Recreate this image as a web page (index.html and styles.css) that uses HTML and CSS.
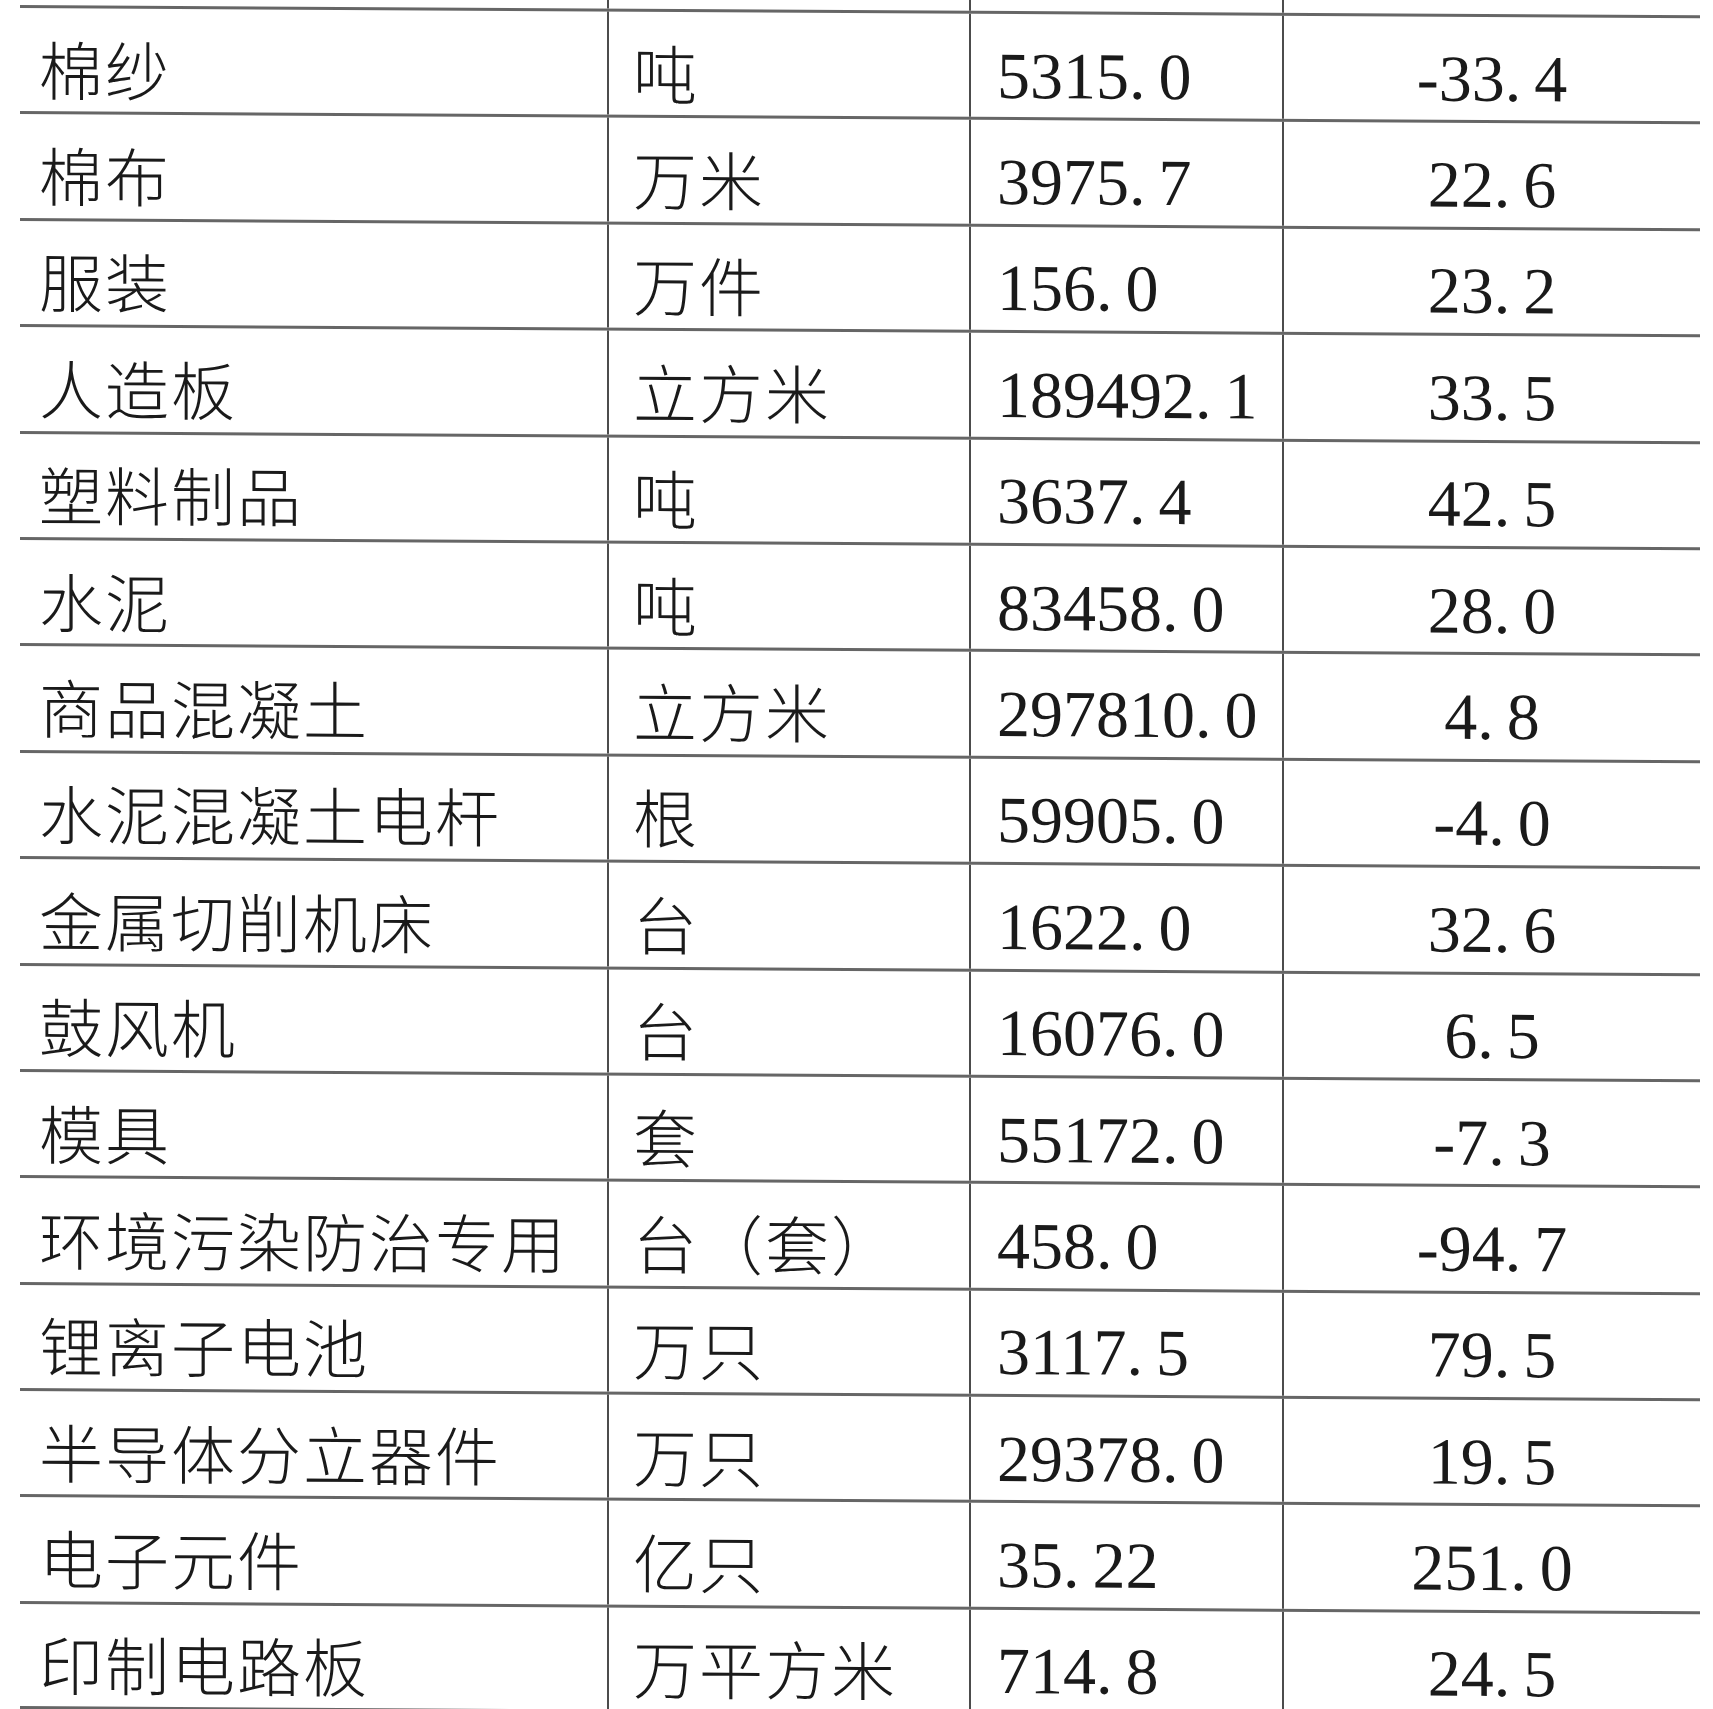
FILE: index.html
```html
<!DOCTYPE html>
<html lang="zh-CN">
<head>
<meta charset="utf-8">
<title>主要工业产品产量</title>
<link rel="stylesheet" href="styles.css">
</head>
<body>
<div class="sheet">
  <div class="row stub"><div class="c c1"></div><div class="c c2"></div><div class="c c3"></div><div class="c c4"></div></div>
  <div class="row"><div class="c c1">棉纱</div><div class="c c2">吨</div><div class="c c3 num">5315<span class="pt">.</span>0</div><div class="c c4 num">-33<span class="pt">.</span>4</div></div>
  <div class="row"><div class="c c1">棉布</div><div class="c c2">万米</div><div class="c c3 num">3975<span class="pt">.</span>7</div><div class="c c4 num">22<span class="pt">.</span>6</div></div>
  <div class="row"><div class="c c1">服装</div><div class="c c2">万件</div><div class="c c3 num">156<span class="pt">.</span>0</div><div class="c c4 num">23<span class="pt">.</span>2</div></div>
  <div class="row"><div class="c c1">人造板</div><div class="c c2">立方米</div><div class="c c3 num">189492<span class="pt">.</span>1</div><div class="c c4 num">33<span class="pt">.</span>5</div></div>
  <div class="row"><div class="c c1">塑料制品</div><div class="c c2">吨</div><div class="c c3 num">3637<span class="pt">.</span>4</div><div class="c c4 num">42<span class="pt">.</span>5</div></div>
  <div class="row"><div class="c c1">水泥</div><div class="c c2">吨</div><div class="c c3 num">83458<span class="pt">.</span>0</div><div class="c c4 num">28<span class="pt">.</span>0</div></div>
  <div class="row"><div class="c c1">商品混凝土</div><div class="c c2">立方米</div><div class="c c3 num">297810<span class="pt">.</span>0</div><div class="c c4 num">4<span class="pt">.</span>8</div></div>
  <div class="row"><div class="c c1">水泥混凝土电杆</div><div class="c c2">根</div><div class="c c3 num">59905<span class="pt">.</span>0</div><div class="c c4 num">-4<span class="pt">.</span>0</div></div>
  <div class="row"><div class="c c1">金属切削机床</div><div class="c c2">台</div><div class="c c3 num">1622<span class="pt">.</span>0</div><div class="c c4 num">32<span class="pt">.</span>6</div></div>
  <div class="row"><div class="c c1">鼓风机</div><div class="c c2">台</div><div class="c c3 num">16076<span class="pt">.</span>0</div><div class="c c4 num">6<span class="pt">.</span>5</div></div>
  <div class="row"><div class="c c1">模具</div><div class="c c2">套</div><div class="c c3 num">55172<span class="pt">.</span>0</div><div class="c c4 num">-7<span class="pt">.</span>3</div></div>
  <div class="row"><div class="c c1">环境污染防治专用</div><div class="c c2">台（套）</div><div class="c c3 num">458<span class="pt">.</span>0</div><div class="c c4 num">-94<span class="pt">.</span>7</div></div>
  <div class="row"><div class="c c1">锂离子电池</div><div class="c c2">万只</div><div class="c c3 num">3117<span class="pt">.</span>5</div><div class="c c4 num">79<span class="pt">.</span>5</div></div>
  <div class="row"><div class="c c1">半导体分立器件</div><div class="c c2">万只</div><div class="c c3 num">29378<span class="pt">.</span>0</div><div class="c c4 num">19<span class="pt">.</span>5</div></div>
  <div class="row"><div class="c c1">电子元件</div><div class="c c2">亿只</div><div class="c c3 num">35<span class="pt">.</span>22</div><div class="c c4 num">251<span class="pt">.</span>0</div></div>
  <div class="row last"><div class="c c1">印制电路板</div><div class="c c2">万平方米</div><div class="c c3 num">714<span class="pt">.</span>8</div><div class="c c4 num">24<span class="pt">.</span>5</div></div>
  <div class="row end"><div class="c c1"></div><div class="c c2"></div><div class="c c3"></div><div class="c c4"></div></div>
</div>
</body>
</html>
```
FILE: styles.css
```css
html, body {
  margin: 0;
  padding: 0;
  height: 1709px;
  overflow: hidden;
  background: #ffffff;
}

.sheet {
  margin: -10px 0 0 20px;
  width: 1680px;
  transform: skewY(0.35deg);
  transform-origin: 0 0;
  color: #1a1a1a;
}

.row {
  display: grid;
  grid-template-columns: 587px 362px 313px 418px;
  height: 106.4px;
  box-sizing: border-box;
  border-top: 3px solid #666666;
}

.row.stub {
  height: 15px;
  border-top: none;
}

.row.last {
  height: 105px;
}

.row.end {
  height: 20px;
}

.c {
  display: flex;
  align-items: center;
  box-sizing: border-box;
  white-space: nowrap;
  padding-top: 14px;
}

.c2, .c3, .c4 {
  border-left: 2px solid #4c4c4c;
}

.c1, .c2 {
  font-family: "Noto Sans CJK SC", "Noto Sans CJK JP", sans-serif;
  font-weight: 300;
  font-size: 64px;
  line-height: 1;
  letter-spacing: 2px;
}

.c1 { padding-left: 19px; }
.c2 { padding-left: 24px; }

.num {
  font-family: "Liberation Serif", serif;
  font-size: 66px;
  line-height: 1;
  letter-spacing: 0;
  padding-top: 20px;
}

.c3 { padding-left: 26px; }
.c4 { justify-content: center; }

.pt {
  margin-right: 13px;
}
```
